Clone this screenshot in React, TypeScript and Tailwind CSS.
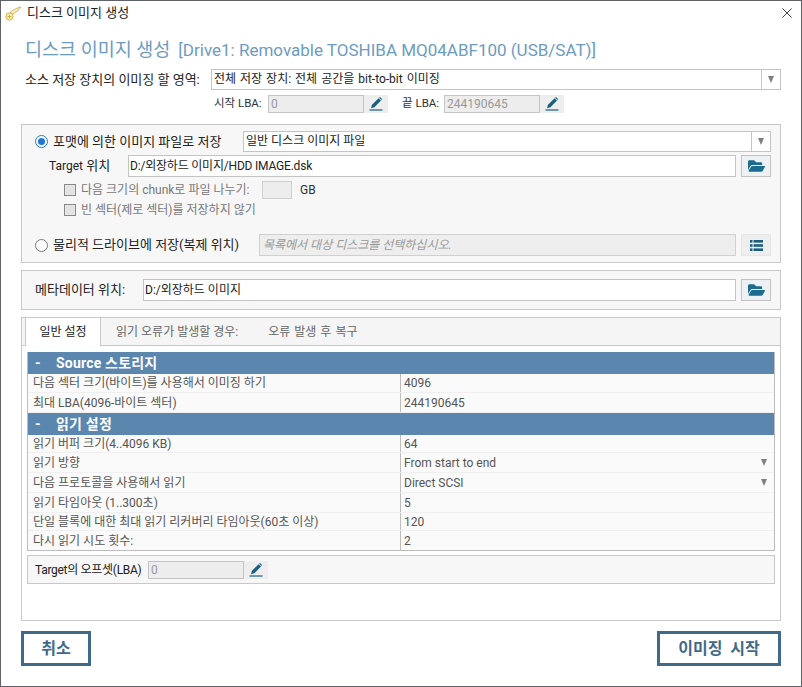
import { FaFolderOpen } from "react-icons/fa";

const font = "[font-family:'Roboto','Noto_Sans_CJK_KR',sans-serif]";

// 날개 로고
function Wing() {
  return (
    <svg viewBox="0 0 16 15" className="h-[15px] w-[16px]" fill="none">
      <path d="M3 9.5C5 6 10 2.5 15.5 1c-.6 1.6-1.6 2.4-2.6 2.9.4.2.4.6-.4 1.1-.6.4-1.2.6-1.9.8.2.4-.2.9-1 1.3-.8.5-1.6.8-2.4.9" fill="#fbf3c8" stroke="#cfa92e" strokeWidth="0.9" />
      <circle cx="4.5" cy="10.5" r="3.6" fill="#fbf3c8" stroke="#cfa92e" strokeWidth="0.9" />
      <path d="M4.5 8.5v4M2.5 10.5h4" stroke="#cfa92e" strokeWidth="0.9" />
    </svg>
  );
}

function Pen() {
  return (
    <svg viewBox="0 0 14 14" className="h-[14px] w-[14px]" fill="#1b5f80">
      <path d="M9.6 1.2l2.4 2.4-6.6 6.6-3.4 1 1-3.4z" />
      <path d="M10.4.5c.3-.3.8-.3 1.1 0l1.2 1.2c.3.3.3.8 0 1.1l-.3.3-2.3-2.3z" />
      <rect x="0.5" y="12.4" width="13" height="1.2" />
    </svg>
  );
}

function ListIcon() {
  return (
    <svg viewBox="0 0 13 11" className="h-[11px] w-[13px]" fill="#1b5f80">
      <rect x="0" y="0" width="2.5" height="2.6" />
      <rect x="3.5" y="0" width="9.5" height="2.6" />
      <rect x="0" y="4.2" width="2.5" height="2.6" />
      <rect x="3.5" y="4.2" width="9.5" height="2.6" />
      <rect x="0" y="8.4" width="2.5" height="2.6" />
      <rect x="3.5" y="8.4" width="9.5" height="2.6" />
    </svg>
  );
}

function Arrow() {
  return <span className="h-0 w-0 border-x-[3.5px] border-t-[7px] border-x-transparent border-t-[#808080]" />;
}

function Select({ text, className }: { text: string; className: string }) {
  return (
    <div className={`flex h-[21px] items-stretch border border-[#c4c4c4] bg-white ${className}`}>
      <span className="flex-1 truncate pl-[2px] leading-[18px] text-[#222]">{text}</span>
      <span className="flex w-[19px] items-center justify-center border-l border-[#c4c4c4]">
        <Arrow />
      </span>
    </div>
  );
}

function LbaInput({ value }: { value: string }) {
  return (
    <div className="flex h-[18px] w-[120px]">
      <span className="w-[96px] border border-[#c4c4c4] bg-[#ededed] pl-[2px] text-[12px] leading-[16px] text-[#999]">{value}</span>
      <span className="flex w-[24px] items-center justify-center bg-[#eeeeee]">
        <Pen />
      </span>
    </div>
  );
}

function IconButton({ disabled, children }: { disabled?: boolean; children: React.ReactNode }) {
  return (
    <span className={`ml-[5px] flex h-[22px] w-[30px] shrink-0 items-center justify-center border ${disabled ? "border-[#e6e6e6] bg-[#eeeeee]" : "border-[#c4c4c4] bg-[#eef1f3]"}`}>
      {children}
    </span>
  );
}

function Radio({ checked }: { checked?: boolean }) {
  return (
    <span className={`flex h-[13px] w-[13px] shrink-0 items-center justify-center rounded-full border ${checked ? "border-[#2a78c8] bg-white" : "border-[#777] bg-white"}`}>
      {checked && <span className="h-[7px] w-[7px] rounded-full bg-[#1e78d2]" />}
    </span>
  );
}

function Check({ label }: { label: string }) {
  return (
    <span className="flex items-center text-[#777]">
      <span className="mr-[5px] h-[12px] w-[12px] border border-[#8a8a8a] bg-[#e4e4e4]" />
      {label}
    </span>
  );
}

function GroupHeader({ title }: { title: string }) {
  return (
    <div className="flex h-[22px] items-center bg-[#5b86ae] pl-[7px] text-[14px] font-bold tracking-[0.2px] text-white">
      <span className="w-[21px]">-</span>
      <span>{title}</span>
    </div>
  );
}

function Row({ name, value, arrow, h }: { name: string; value: string; arrow?: boolean; h: string }) {
  return (
    <div className={`flex border-b border-[#f0f0f0] bg-[#fafafa] text-[#555] ${h}`}>
      <span className="flex w-[373px] items-center truncate border-r border-[#bdbdbd] pl-[5px]">{name}</span>
      <span className="flex flex-1 items-center justify-between pl-[3px] pr-[7px]">
        {value}
        {arrow && <Arrow />}
      </span>
    </div>
  );
}

export default function App() {
  return (
    <div className={`h-[687px] w-[802px] overflow-hidden bg-[#5f6368] p-[1px] text-[12px] ${font}`}>
      <div className="flex h-full w-[800px] flex-col bg-white">
        {/* barra de título */}
        <div className="flex h-[24px] items-center pl-[4px]">
          <Wing />
          <span className="ml-[6px] text-[13px] text-[#222]">디스크 이미지 생성</span>
          <svg viewBox="0 0 12 12" className="ml-auto mr-[9px] h-[10px] w-[10px]" stroke="#222" strokeWidth="1">
            <path d="M0.5 0.5l11 11M11.5 0.5l-11 11" />
          </svg>
        </div>

        <div className="flex flex-1 flex-col px-[20px]">
          <h1 className="mt-[15px] whitespace-nowrap pl-[4px] text-[17px] leading-[20px] text-[#6d9cc0]">
            <span className="text-[18.5px]">디스크 이미지 생성</span>
            <span className="ml-[8px]">[Drive1: Removable TOSHIBA MQ04ABF100 (USB/SAT)]</span>
          </h1>

          <div className="mt-[9px] flex items-center">
            <span className="w-[190px] whitespace-nowrap pl-[4px] text-[13px] text-[#222]">소스 저장 장치의 이미징 할 영역:</span>
            <Select text="전체 저장 장치: 전체 공간을 bit-to-bit 이미징" className="flex-1 [word-spacing:1px]" />
          </div>

          <div className="mt-[5px] flex items-center pl-[193px] text-[11.5px] text-[#333]">
            <span className="w-[54px] whitespace-nowrap">시작 LBA:</span>
            <LbaInput value="0" />
            <span className="ml-[14px] w-[42px] whitespace-nowrap">끝 LBA:</span>
            <LbaInput value="244190645" />
          </div>

          {/* opciones de destino */}
          <div className="mt-[11px] h-[139px] border border-[#c8c8c8] bg-[#f7f7f7] pl-[13px] pr-[9px] pt-[6px]">
            <div className="flex items-center">
              <Radio checked />
              <span className="ml-[5px] w-[190px] whitespace-nowrap text-[13px] text-[#222]">포맷에 의한 이미지 파일로 저장</span>
              <Select text="일반 디스크 이미지 파일" className="flex-1" />
            </div>
            <div className="mt-[3px] flex items-center">
              <span className="w-[93px] pl-[14px] text-[13px] text-[#222]">
                <span className="text-[12px]">Target</span> 위치
              </span>
              <span className="h-[22px] flex-1 border border-[#c4c4c4] bg-white pl-[1px] leading-[20px] tracking-[-0.2px] text-[#222]">D:/외장하드 이미지/HDD IMAGE.dsk</span>
              <IconButton>
                <FaFolderOpen className="h-[16px] w-[17px] text-[#1b6a8f]" />
              </IconButton>
            </div>
            <div className="mt-[4px] flex h-[18px] items-center pl-[29px]">
              <span className="w-[198px]">
                <Check label="다음 크기의 chunk로 파일 나누기:" />
              </span>
              <span className="h-[18px] w-[30px] border border-[#d0d0d0] bg-[#ededed]" />
              <span className="ml-[8px] text-[#333]">GB</span>
            </div>
            <div className="mt-[2px] flex h-[18px] items-center pl-[29px]">
              <Check label="빈 섹터(제로 섹터)를 저장하지 않기" />
            </div>
            <div className="mt-[15px] flex items-center">
              <Radio />
              <span className="ml-[5px] w-[206px] whitespace-nowrap text-[13px] text-[#222]">물리적 드라이브에 저장(복제 위치)</span>
              <span className="h-[22px] flex-1 border border-[#d0d0d0] bg-[#eeeeee] pl-[3px] italic leading-[20px] text-[#999]">목록에서 대상 디스크를 선택하십시오.</span>
              <IconButton disabled>
                <ListIcon />
              </IconButton>
            </div>
          </div>

          <div className="mt-[7px] flex h-[40px] items-center border border-[#c8c8c8] bg-[#f7f7f7] pl-[13px] pr-[9px]">
            <span className="w-[108px] whitespace-nowrap text-[13px] text-[#222]">메타데이터 위치:</span>
            <span className="h-[22px] flex-1 border border-[#c4c4c4] bg-white pl-[1px] leading-[20px] text-[#222]">D:/외장하드 이미지</span>
            <IconButton>
              <FaFolderOpen className="h-[16px] w-[17px] text-[#1b6a8f]" />
            </IconButton>
          </div>

          {/* pestañas */}
          <div className="mt-[7px] flex h-[304px] flex-col border border-[#c8c8c8] bg-white">
            <div className="flex h-[28px] items-stretch border-b border-[#c8c8c8] bg-[#f5f5f5] pl-[3px] text-[#666]">
              <span className="-mb-[1px] flex w-[76px] items-center justify-center border-x border-[#c8c8c8] bg-white text-[#222]">일반 설정</span>
              <span className="ml-[15px] flex items-center">읽기 오류가 발생할 경우:</span>
              <span className="ml-[30px] flex items-center [word-spacing:1px]">오류 발생 후 복구</span>
            </div>
            <div className="mx-[5px] mt-[6px] border-x border-[#bdbdbd]">
              <GroupHeader title="Source 스토리지" />
              <Row h="h-[19px]" name="다음 섹터 크기(바이트)를 사용해서 이미징 하기" value="4096" />
              <Row h="h-[20px]" name="최대 LBA(4096-바이트 섹터)" value="244190645" />
              <GroupHeader title="읽기 설정" />
              <Row h="h-[18px]" name="읽기 버퍼 크기(4..4096 KB)" value="64" />
              <Row h="h-[20px]" name="읽기 방향" value="From start to end" arrow />
              <Row h="h-[20px]" name="다음 프로토콜을 사용해서 읽기" value="Direct SCSI" arrow />
              <Row h="h-[20px]" name="읽기 타임아웃 (1..300초)" value="5" />
              <Row h="h-[18px]" name="단일 블록에 대한 최대 읽기 리커버리 타임아웃(60초 이상)" value="120" />
              <Row h="h-[20px] border-b-[#bdbdbd]" name="다시 읽기 시도 횟수:" value="2" />
            </div>
            <div className="mx-[5px] mt-[4px] flex h-[29px] items-center border border-[#c8c8c8] bg-[#f7f7f7] pl-[7px]">
              <span className="w-[113px] whitespace-nowrap tracking-[-0.3px] text-[#222]">Target의 오프셋(LBA)</span>
              <LbaInput value="0" />
            </div>
          </div>

          <div className="mt-[10px] flex justify-between">
            <button className="h-[35px] w-[70px] border-[3px] border-[#3f6a8a] text-[16px] font-bold text-[#3f6a8a]">취소</button>
            <button className="h-[35px] w-[124px] border-[3px] border-[#3f6a8a] text-[16px] font-bold text-[#3f6a8a] [word-spacing:4px]">이미징 시작</button>
          </div>
        </div>
      </div>
    </div>
  );
}
